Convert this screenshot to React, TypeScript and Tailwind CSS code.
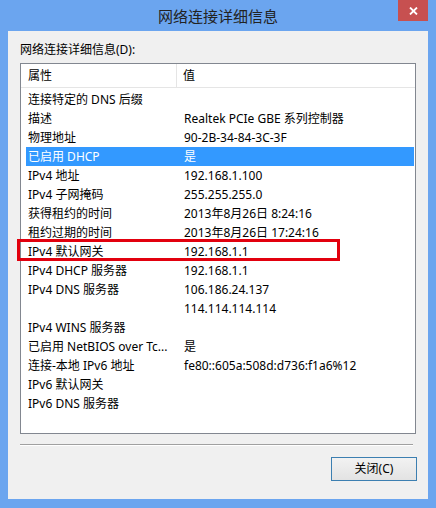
import React from 'react';

type Row = { name: string; value: string };

const rows: Row[] = [
  { name: '连接特定的 DNS 后缀', value: '' },
  { name: '描述', value: 'Realtek PCIe GBE 系列控制器' },
  { name: '物理地址', value: '90-2B-34-84-3C-3F' },
  { name: '已启用 DHCP', value: '是' },
  { name: 'IPv4 地址', value: '192.168.1.100' },
  { name: 'IPv4 子网掩码', value: '255.255.255.0' },
  { name: '获得租约的时间', value: '2013年8月26日 8:24:16' },
  { name: '租约过期的时间', value: '2013年8月26日 17:24:16' },
  { name: 'IPv4 默认网关', value: '192.168.1.1' },
  { name: 'IPv4 DHCP 服务器', value: '192.168.1.1' },
  { name: 'IPv4 DNS 服务器', value: '106.186.24.137' },
  { name: '', value: '114.114.114.114' },
  { name: 'IPv4 WINS 服务器', value: '' },
  { name: '已启用 NetBIOS over Tc...', value: '是' },
  { name: '连接-本地 IPv6 地址', value: 'fe80::605a:508d:d736:f1a6%12' },
  { name: 'IPv6 默认网关', value: '' },
  { name: 'IPv6 DNS 服务器', value: '' },
];

const SELECTED = 3;
const MARKED = 8;

export default function App() {
  return (
    <div
      className="w-[436px] h-[508px] bg-[#6ba5ef] flex flex-col text-black"
      style={{ fontFamily: '"Noto Sans", "Noto Sans CJK SC", sans-serif' }}
    >
      {/* Title bar */}
      <div className="relative h-[31px] flex items-center justify-center shrink-0">
        <span className="text-[15px] leading-[20px] text-[#222]">网络连接详细信息</span>
        <button className="absolute top-0 right-[8px] w-[30px] h-[21px] bg-[#c75050] flex items-center justify-center">
          <svg width="9" height="8" viewBox="0 0 9 8">
            <path d="M1 0.5 L8 7.5 M8 0.5 L1 7.5" stroke="white" strokeWidth="1.8" />
          </svg>
        </button>
      </div>

      {/* Client area */}
      <div className="mx-[8px] h-[468px] bg-[#f0f0f0] flex flex-col px-[12px] pt-[10px]">
        <div className="text-[12px] leading-[18px] mb-[4px]">网络连接详细信息(D):</div>

        <div className="w-[396px] h-[371px] bg-white border border-[#828790] flex flex-col">
          {/* Header */}
          <div className="h-[24px] flex border-b border-[#e5e5e5] text-[12px]">
            <div className="w-[156px] border-r border-[#e5e5e5] flex items-center pl-[7px]">属性</div>
            <div className="flex items-center pl-[6px]">值</div>
          </div>

          <div className="pt-[2px] pl-[5px] pr-[1px] flex flex-col">
            {rows.map((r, i) => (
              <div
                key={i}
                className={`relative h-[19px] flex items-center text-[12px] whitespace-nowrap ${
                  i === SELECTED ? 'bg-[#3399ff] text-white' : ''
                }`}
              >
                <div className="w-[156px] pl-[2px]">{r.name}</div>
                <div className="pl-[2px]">{r.value}</div>
                {i === MARKED && (
                  <div className="absolute left-[-9px] top-[-3px] w-[323px] h-[22px] border-[3px] border-[#e2000e]" />
                )}
              </div>
            ))}
          </div>
        </div>

        {/* Separator */}
        <div className="mt-[10px] w-[393px] h-[2px] flex flex-col">
          <div className="h-[1px] bg-[#a0a0a0]" />
          <div className="h-[1px] bg-white" />
        </div>

        {/* Buttons */}
        <div className="flex justify-end mt-[11px] pr-[-1px]">
          <button className="w-[86px] h-[24px] mr-[-1px] border border-[#3c7fb1] bg-gradient-to-b from-[#f2f2f2] to-[#e3e3e3] text-[12px] flex items-center justify-center">
            关闭(C)
          </button>
        </div>
      </div>
    </div>
  );
}
